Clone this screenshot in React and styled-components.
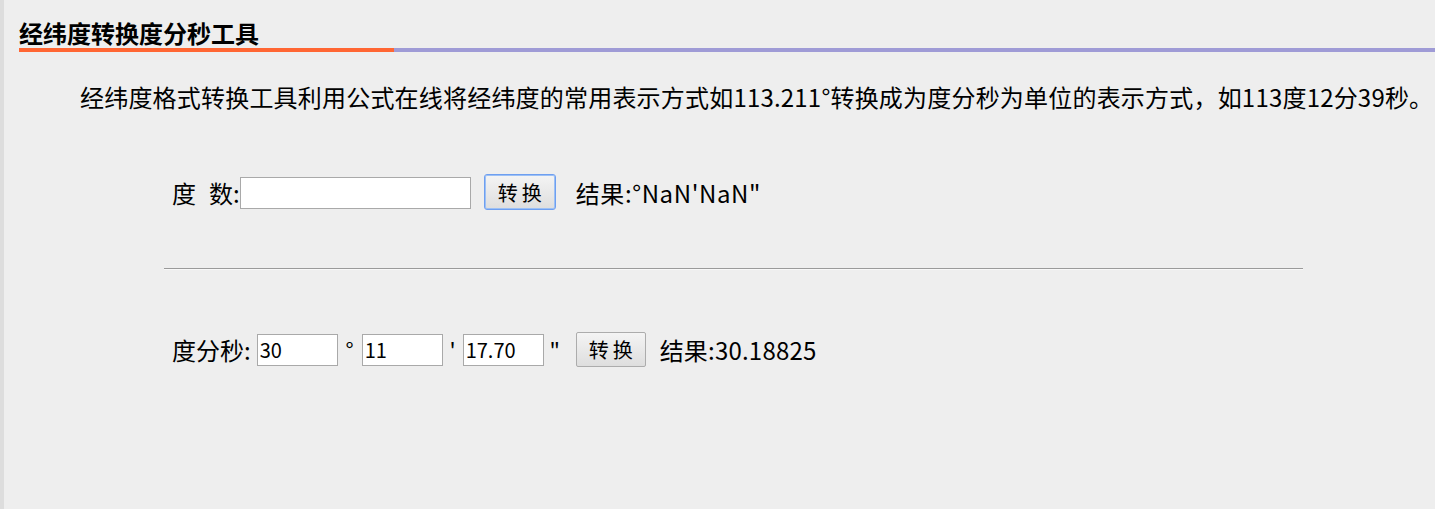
import { useState } from "react"
import styled, { createGlobalStyle } from "styled-components"

const GlobalStyle = createGlobalStyle`
    html, body {
        margin: 0;
        padding: 0;
        background: #eeeeee;
    }
    body {
        font-family: "Noto Sans CJK SC", "Liberation Sans", sans-serif;
        color: #000;
    }
`

const Page = styled.div`
    min-height: 509px;
    border-left: 4px solid #dddddd;
    background: #eeeeee;
    padding-left: 15px;
    box-sizing: border-box;
`

const Title = styled.h2`
    margin: 0;
    padding-top: 18px;
    font-size: 24px;
    line-height: 30px;
    font-weight: 700;
    color: #000;
`

const Bar = styled.div`
    display: flex;
    height: 4px;
`

const BarPart = styled.div`
    background: ${p => p.$color};
    width: ${p => p.$width || "auto"};
    flex: ${p => (p.$width ? "none" : "1")};
`

const Intro = styled.p`
    margin: 27px 0 0;
    padding-left: 61px;
    font-size: 24px;
    line-height: 36px;
    white-space: nowrap;
    letter-spacing: 0.2px;
`

const Row = styled.div`
    display: flex;
    align-items: center;
    padding-left: 153px;
    height: 36px;
    margin-top: ${p => p.$top}px;
    font-size: 24px;
`

const Label = styled.span`
    white-space: pre;
    letter-spacing: ${p => p.$spacing || 0}px;
`

const Spacer = styled.span`
    display: inline-block;
    width: ${p => p.$w}px;
`

const Input = styled.input`
    box-sizing: border-box;
    width: ${p => p.$w}px;
    height: 32px;
    margin: 1px ${p => p.$right || 0}px 0 ${p => p.$left || 0}px;
    padding: 0 2px;
    border: 1px solid #a9a9a9;
    background: #fff;
    font-family: "Noto Sans CJK SC", "Liberation Sans", sans-serif;
    font-size: 20px;
    color: #000;
    outline: none;
`

const Mark = styled.span`
    font-size: 22px;
    width: ${p => p.$w}px;
    text-align: center;
`

const Button = styled.button`
    box-sizing: border-box;
    width: ${p => p.$w}px;
    height: ${p => (p.$focus ? 36 : 35)}px;
    margin: 0 ${p => p.$right}px 0 ${p => p.$left}px;
    padding: 0;
    border: 1px solid ${p => (p.$focus ? "#6e9ff0" : "#acacac")};
    border-radius: ${p => (p.$focus ? 3 : 2)}px;
    box-shadow: ${p => (p.$focus ? "inset 0 0 0 1px #9cc0f5" : "none")};
    background: linear-gradient(#f4f4f4, #dedede);
    font-family: "Noto Sans CJK SC", sans-serif;
    font-size: 20px;
    letter-spacing: 4px;
    text-indent: 4px;
    color: #000;
    cursor: pointer;
`

const Divider = styled.div`
    margin: 58px 0 0 145px;
    width: 1139px;
    border-top: 1px solid #9a9a9a;
    border-bottom: 1px solid #f8f8f8;
`

const App = () => {
    const [deg, setDeg] = useState("")
    const [d, setD] = useState("30")
    const [m, setM] = useState("11")
    const [s, setS] = useState("17.70")
    const [res1, setRes1] = useState("°NaN'NaN\"")
    const [res2, setRes2] = useState("30.18825")

    // decimal -> d°m's"
    const toDms = () => {
        const v = parseFloat(deg)
        const dd = Math.floor(v)
        const mm = Math.floor((v - dd) * 60)
        const ss = Math.round(((v - dd) * 60 - mm) * 60)
        setRes1(isNaN(v) ? "°NaN'NaN\"" : `${dd}°${mm}'${ss}"`)
    }
    const toDec = () => {
        const v = parseFloat(d) + parseFloat(m) / 60 + parseFloat(s) / 3600
        setRes2(String(Math.round(v * 100000) / 100000))
    }

    return <>
        <GlobalStyle />
        <Page>
            <Title>经纬度转换度分秒工具</Title>
            <Bar>
                <BarPart $color="#ff6633" $width="375px" />
                <BarPart $color="#9f9bd6" />
            </Bar>
            <Intro>经纬度格式转换工具利用公式在线将经纬度的常用表示方式如113.211°转换成为度分秒为单位的表示方式，如113度12分39秒。</Intro>
            <Row $top={59}>
                <Label>度<Spacer $w={13} />数:</Label>
                <Input $w={231} value={deg} onChange={e => setDeg(e.target.value)} />
                <Button $focus $w={72} $left={13} $right={20} onClick={toDms}>转换</Button>
                <Label $spacing={0.6}>结果:{res1}</Label>
            </Row>
            <Divider />
            <Row $top={61}>
                <Label>度分秒:</Label>
                <Input $w={81} $left={6} value={d} onChange={e => setD(e.target.value)} />
                <Mark $w={24}>°</Mark>
                <Input $w={81} value={m} onChange={e => setM(e.target.value)} />
                <Mark $w={20}>'</Mark>
                <Input $w={81} value={s} onChange={e => setS(e.target.value)} />
                <Mark $w={22}>"</Mark>
                <Button $w={70} $left={10} $right={14} onClick={toDec}>转换</Button>
                <Label $spacing={0.2}>结果:{res2}</Label>
            </Row>
        </Page>
    </>
}

export default App
